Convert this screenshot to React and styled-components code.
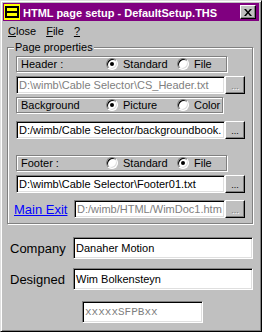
import React from 'react'
import styled, { createGlobalStyle } from 'styled-components'

const Global = createGlobalStyle`
  body {
    margin: 0;
    background: #c0c0c0;
    font-family: "Liberation Sans", Arial, sans-serif;
    font-size: 11px;
  }
`

const Window = styled.div`
  width: 262px;
  height: 332px;
  box-sizing: border-box;
  background: #c0c0c0;
  border: 1px solid;
  border-color: #dfdfdf #000 #000 #dfdfdf;
  box-shadow: inset 1px 1px #fff, inset -1px -1px #808080;
  padding: 2px;
  display: flex;
  flex-direction: column;
`

const TitleBar = styled.div`
  height: 18px;
  background: #800080;
  display: flex;
  align-items: center;
  padding: 0 3px 0 1px;
  gap: 3px;
  color: #fff;
  font-weight: bold;
  font-size: 11px;
  white-space: nowrap;
`

const Title = styled.span`
  flex: 1;
  margin-top: 1px;
`

const CloseBox = styled.div`
  width: 16px;
  height: 14px;
  box-sizing: border-box;
  background: #c0c0c0;
  border: 1px solid;
  border-color: #fff #000 #000 #fff;
  box-shadow: inset -1px -1px #808080;
  display: flex;
  align-items: center;
  justify-content: center;
`

const MenuBar = styled.div`
  height: 18px;
  display: flex;
  align-items: center;
  gap: 10px;
  padding-left: 5px;
  margin-top: 1px;
`

const MenuItem = styled.span`
  u { text-decoration: underline; }
`

const Client = styled.div`
  padding: 7px 6px 0 4px;
`

const Group = styled.div`
  position: relative;
  height: 177px;
  box-sizing: border-box;
  border: 1px solid #808080;
  box-shadow: inset 1px 1px #fff, 1px 1px #fff;
  padding: 0 0 0 8px;
  display: flex;
  flex-direction: column;
`

const Legend = styled.span`
  position: absolute;
  top: -7px;
  left: 6px;
  padding: 0 1px;
  background: #c0c0c0;
`

const OptionRow = styled.div`
  margin-top: ${p => p.$top}px;
  width: ${p => p.$w}px;
  height: 16px;
  box-sizing: border-box;
  border: 1px solid #808080;
  box-shadow: inset 1px 1px #fff, 1px 1px #fff;
  padding-left: 4px;
  display: grid;
  grid-template-columns: 85px 71px auto;
  align-items: center;
`

const Option = styled.label`
  display: flex;
  align-items: center;
  gap: 5px;
`

const Radio = styled.span`
  width: 12px;
  height: 12px;
  box-sizing: border-box;
  border-radius: 50%;
  background: #fff;
  border: 1px solid;
  border-color: #808080 #fff #fff #808080;
  box-shadow: inset 1px 1px #000, inset -1px -1px #dfdfdf;
  display: flex;
  align-items: center;
  justify-content: center;

  &::after {
    content: '';
    display: ${p => (p.$on ? 'block' : 'none')};
    width: 4px;
    height: 4px;
    border-radius: 50%;
    background: #000;
  }
`

const PathRow = styled.div`
  margin-top: ${p => p.$top}px;
  display: flex;
  align-items: stretch;
  height: 18px;
`

const TextBox = styled.div`
  flex: none;
  width: ${p => p.$w}px;
  height: ${p => p.$h || 18}px;
  line-height: ${p => (p.$h || 18) - 4}px;
  box-sizing: border-box;
  background: #fff;
  border: 1px solid;
  border-color: #808080 #fff #fff #808080;
  box-shadow: inset 1px 1px #000, inset -1px -1px #dfdfdf;
  padding: 1px 2px;
  overflow: hidden;
  white-space: nowrap;
  color: ${p => (p.$off ? '#808080' : '#000')};
  font-size: ${p => p.$size || 11}px;
  font-family: ${p => (p.$mono ? '"Liberation Mono", monospace' : 'inherit')};
`

const DotsButton = styled.div`
  flex: none;
  width: 20px;
  box-sizing: border-box;
  background: #c0c0c0;
  border: 1px solid;
  border-color: #fff #000 #000 #fff;
  box-shadow: inset -1px -1px #808080;
  display: flex;
  align-items: center;
  justify-content: center;
  padding-top: 2px;
  font-size: 9px;
  color: ${p => (p.$off ? '#808080' : '#000')};
  text-shadow: ${p => (p.$off ? '1px 1px #fff' : 'none')};
`

const LinkLabel = styled.a`
  flex: none;
  align-self: center;
  color: #0000ff;
  text-decoration: underline;
  font-size: 13px;
  margin-left: -2px;
  width: 60px;
  white-space: nowrap;
`

const FieldRow = styled.div`
  margin-top: ${p => p.$top}px;
  display: flex;
  align-items: center;
  padding-left: 3px;
`

const FieldLabel = styled.span`
  font-size: 13px;
  width: 65px;
`

const Serial = styled.div`
  margin: 11px 0 0 75px;
`

const AppIcon = () => (
  <svg width="16" height="16" viewBox="0 0 16 16">
    <rect x="0" y="0" width="16" height="16" fill="#ffff00" />
    <rect x="1" y="2" width="14" height="2" fill="#000" />
    <rect x="1" y="7" width="14" height="2" fill="#000" />
    <rect x="1" y="12" width="14" height="2" fill="#000" />
    <rect x="1" y="2" width="2" height="12" fill="#000" />
    <rect x="13" y="2" width="2" height="12" fill="#000" />
    <rect x="3" y="4" width="10" height="3" fill="#ffff00" />
    <rect x="3" y="9" width="10" height="3" fill="#ffff00" />
  </svg>
)

const CloseGlyph = () => (
  <svg width="8" height="7" viewBox="0 0 8 7">
    <path d="M0 0h2l2 2.5L6 0h2L5 3.5 8 7H6L4 4.5 2 7H0l3-3.5z" fill="#000" />
  </svg>
)

const Choice = ({ on, children }) => (
  <Option>
    <Radio $on={on} />
    {children}
  </Option>
)

const App = () => {
  return (
    <>
      <Global />
      <Window>
        <TitleBar>
          <AppIcon />
          <Title>HTML page setup - DefaultSetup.THS</Title>
          <CloseBox><CloseGlyph /></CloseBox>
        </TitleBar>
        <MenuBar>
          <MenuItem><u>C</u>lose</MenuItem>
          <MenuItem><u>F</u>ile</MenuItem>
          <MenuItem><u>?</u></MenuItem>
        </MenuBar>
        <Client>
          <Group>
            <Legend>Page properties</Legend>
            <OptionRow $top={8} $w={211}>
              <span>Header :</span>
              <Choice on>Standard</Choice>
              <Choice>File</Choice>
            </OptionRow>
            <PathRow $top={4}>
              <TextBox $w={209} $off>D:\wimb\Cable Selector\CS_Header.txt</TextBox>
              <DotsButton $off>...</DotsButton>
            </PathRow>
            <OptionRow $top={3} $w={207}>
              <span>Background</span>
              <Choice on>Picture</Choice>
              <Choice>Color</Choice>
            </OptionRow>
            <PathRow $top={8}>
              <TextBox $w={209}>D:/wimb/Cable Selector/backgroundbook.</TextBox>
              <DotsButton>...</DotsButton>
            </PathRow>
            <OptionRow $top={16} $w={211}>
              <span>Footer :</span>
              <Choice>Standard</Choice>
              <Choice on>File</Choice>
            </OptionRow>
            <PathRow $top={4}>
              <TextBox $w={209}>D:\wimb\Cable Selector\Footer01.txt</TextBox>
              <DotsButton>...</DotsButton>
            </PathRow>
            <PathRow $top={7}>
              <LinkLabel>Main Exit</LinkLabel>
              <TextBox $w={151} $off>D:/wimb/HTML/WimDoc1.htm</TextBox>
              <DotsButton $off>...</DotsButton>
            </PathRow>
          </Group>
          <FieldRow $top={13}>
            <FieldLabel>Company</FieldLabel>
            <TextBox $w={180} $h={22}>Danaher Motion</TextBox>
          </FieldRow>
          <FieldRow $top={9}>
            <FieldLabel>Designed</FieldLabel>
            <TextBox $w={180} $h={22}>Wim Bolkensteyn</TextBox>
          </FieldRow>
          <Serial>
            <TextBox $w={121} $h={22} $off $mono>xxxxxSFPBxx</TextBox>
          </Serial>
        </Client>
      </Window>
    </>
  )
}

export default App
